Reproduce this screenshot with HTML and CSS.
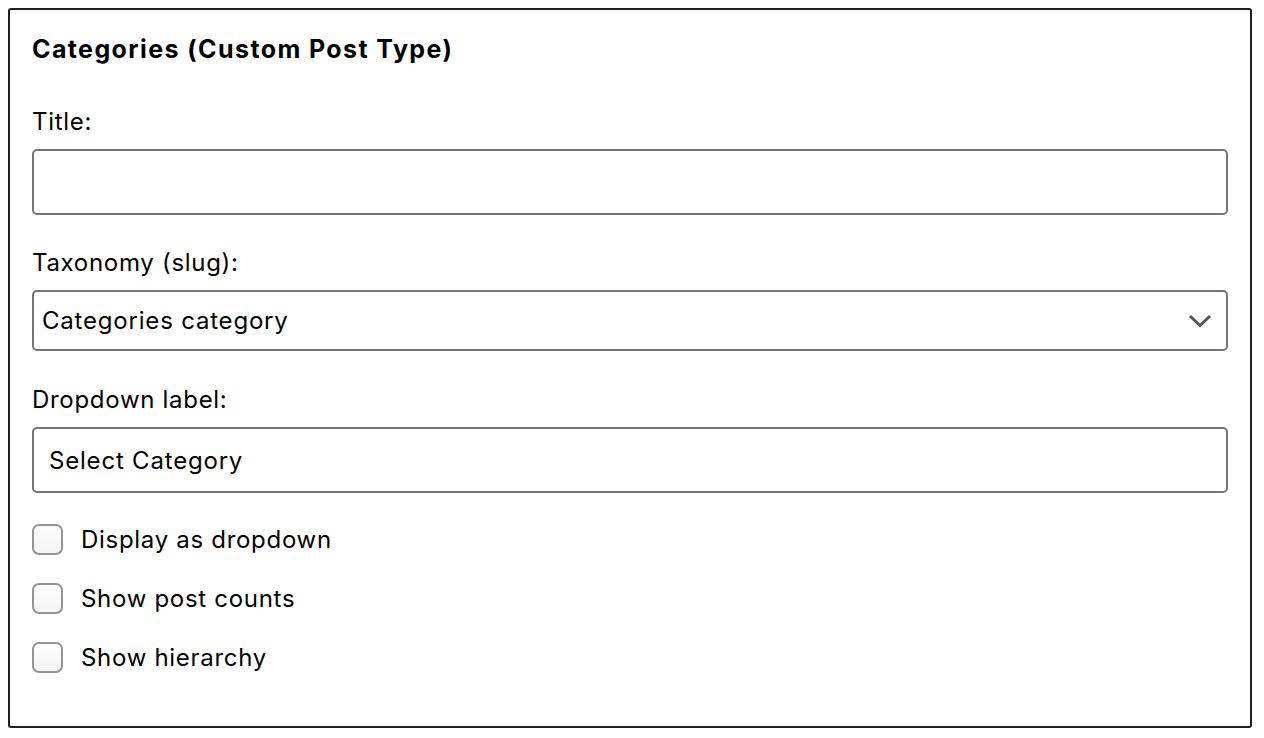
FILE: index.html
```html
<!DOCTYPE html>
<html lang="en">
<head>
    <meta charset="UTF-8">
    <meta name="viewport" content="width=device-width, initial-scale=1.0">
    <title>Categories (Custom Post Type)</title>
    <link rel="stylesheet" href="styles.css">
</head>
<body>

    <form class="widget">
        <h3 class="widget-title">Categories (Custom Post Type)</h3>

        <label class="field-label" for="title">Title:</label>
        <input type="text" id="title" class="field-input">

        <label class="field-label" for="taxonomy">Taxonomy (slug):</label>
        <div class="select-wrap">
            <select id="taxonomy" class="field-select">
                <option value="category">Categories category</option>
            </select>
            <svg class="select-arrow" width="24" height="14" viewBox="0 0 24 14">
                <path d="M2 2 L12 11.5 L22 2" fill="none" stroke="#555" stroke-width="3"/>
            </svg>
        </div>

        <label class="field-label" for="dropdownLabel">Dropdown label:</label>
        <input type="text" id="dropdownLabel" class="field-input" value="Select Category">

        <!-- Options -->
        <div class="options">
            <label class="option"><input type="checkbox" class="check"> Display as dropdown</label>
            <label class="option"><input type="checkbox" class="check"> Show post counts</label>
            <label class="option"><input type="checkbox" class="check"> Show hierarchy</label>
        </div>
    </form>

</body>
</html>
```

FILE: styles.css
```css
body {
    margin: 8px;
    background: #fff;
    font-family: Inter, 'Noto Sans', sans-serif;
    color: #1e1e1e;
}
.widget {
    width: 1244px;
    box-sizing: border-box;
    border: 2px solid #1e1e1e;
    border-radius: 3px;
    padding: 24px 22px 53px 22px;
}
.widget-title {
    margin: 0 0 43px 0;
    font-size: 25px;
    line-height: 30px;
    font-weight: 700;
    letter-spacing: 1.4px;
    color: #000;
}
.field-label {
    display: block;
    font-size: 24px;
    letter-spacing: 0.7px;
    line-height: 30px;
    margin-bottom: 12px;
    color: #000;
}
.field-input,
.field-select {
    display: block;
    width: 100%;
    box-sizing: border-box;
    border: 2px solid #757575;
    border-radius: 5px;
    background: #fff;
    font-family: inherit;
    font-size: 24px;
    letter-spacing: 0.8px;
    color: #000;
    margin: 0;
}
.field-input {
    height: 66px;
    padding: 0 15px;
    margin-bottom: 33px;
}
.select-wrap {
    position: relative;
    margin-bottom: 34px;
}
.field-select {
    height: 61px;
    padding: 0 8px;
    appearance: none;
    -webkit-appearance: none;
}
.select-arrow {
    position: absolute;
    right: 16px;
    top: 24px;
}
.options {
    margin-top: -2px;
}
.option {
    display: flex;
    align-items: center;
    gap: 18px;
    font-size: 24px;
    letter-spacing: 0.7px;
    height: 31px;
    margin-bottom: 28px;
    color: #000;
}
.option:last-child {
    margin-bottom: 0;
}
.check {
    appearance: none;
    -webkit-appearance: none;
    width: 31px;
    height: 31px;
    margin: 0;
    border: 2px solid #949494;
    border-radius: 7px;
    background: linear-gradient(#fdfdfd, #f4f4f4);
}
```
